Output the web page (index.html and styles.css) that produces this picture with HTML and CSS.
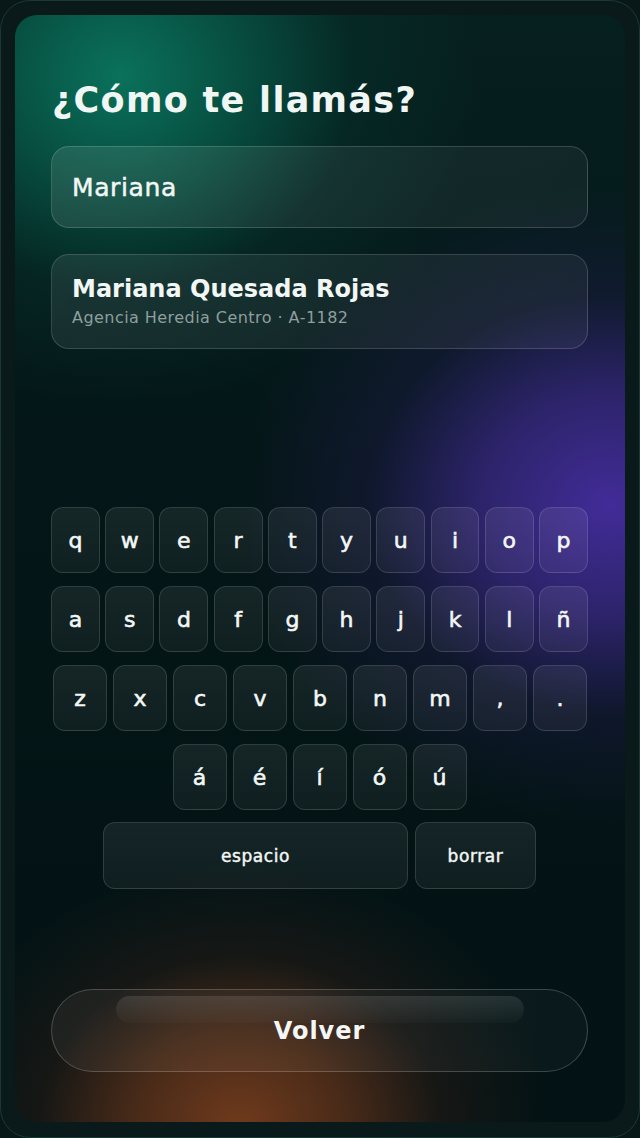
FILE: index.html
```html
<!DOCTYPE html>
<html lang="es">
<head>
<meta charset="utf-8">
<title>¿Cómo te llamás?</title>
<link rel="stylesheet" href="styles.css">
</head>
<body>
<div class="frame">
  <main class="screen">
    <h1 class="title">¿Cómo te llamás?</h1>
    <div class="input">Mariana</div>
    <div class="card">
      <div class="card-name">Mariana Quesada Rojas</div>
      <div class="card-sub">Agencia Heredia Centro · A-1182</div>
    </div>
    <div class="keyboard">
      <div class="row row-full">
        <button class="key">q</button><button class="key">w</button><button class="key">e</button><button class="key">r</button><button class="key">t</button><button class="key">y</button><button class="key">u</button><button class="key">i</button><button class="key">o</button><button class="key">p</button>
      </div>
      <div class="row row-full">
        <button class="key">a</button><button class="key">s</button><button class="key">d</button><button class="key">f</button><button class="key">g</button><button class="key">h</button><button class="key">j</button><button class="key">k</button><button class="key">l</button><button class="key">ñ</button>
      </div>
      <div class="row row-nine">
        <button class="key">z</button><button class="key">x</button><button class="key">c</button><button class="key">v</button><button class="key">b</button><button class="key">n</button><button class="key">m</button><button class="key">,</button><button class="key">.</button>
      </div>
      <div class="row row-center">
        <button class="key key-fixed">á</button><button class="key key-fixed">é</button><button class="key key-fixed">í</button><button class="key key-fixed">ó</button><button class="key key-fixed">ú</button>
      </div>
      <div class="row row-center row-actions">
        <button class="key key-space">espacio</button><button class="key key-del">borrar</button>
      </div>
    </div>
    <button class="volver">Volver</button>
  </main>
</div>
</body>
</html>
```

FILE: styles.css
```css
* { box-sizing: border-box; }
html, body {
  margin: 0;
  padding: 0;
  background: #081818;
}
body {
  width: 640px;
  height: 1138px;
  font-family: "DejaVu Sans", "Liberation Sans", sans-serif;
  color: #eef5f3;
}
.frame {
  width: 640px;
  height: 1138px;
  border: 1px solid #1c3835;
  border-radius: 30px;
  padding: 14px 14px 15px 14px;
  background: #0a1a1b;
}
.screen {
  position: relative;
  height: 100%;
  border-radius: 22px;
  overflow: hidden;
  padding: 0 37px 0 36px;
  display: flex;
  flex-direction: column;
  background:
    radial-gradient(ellipse 360px 330px at 105px 60px, rgba(10, 118, 94, 0.95) 0%, rgba(8, 100, 80, 0.65) 35%, rgba(6, 62, 54, 0.3) 65%, rgba(4, 30, 30, 0) 100%),
    radial-gradient(ellipse 370px 320px at 595px 490px, rgba(66, 44, 152, 1) 0%, rgba(58, 40, 134, 0.75) 35%, rgba(36, 28, 84, 0.35) 65%, rgba(10, 16, 30, 0) 100%),
    radial-gradient(ellipse 310px 260px at 225px 1110px, rgba(112, 58, 28, 1) 0%, rgba(94, 50, 26, 0.75) 35%, rgba(56, 32, 22, 0.35) 65%, rgba(10, 20, 20, 0) 100%),
    linear-gradient(180deg, #06201f 0%, #041617 40%, #031214 100%);
}
.title {
  margin: 64px 0 0 1px;
  font-size: 35px;
  line-height: 42px;
  font-weight: 700;
  letter-spacing: 1.3px;
  color: #f0f6f4;
}
.input {
  margin-top: 25px;
  height: 82px;
  border-radius: 18px;
  border: 1px solid rgba(255, 255, 255, 0.16);
  background: linear-gradient(120deg, rgba(255, 255, 255, 0.10) 0%, rgba(255, 255, 255, 0.06) 60%, rgba(255, 255, 255, 0.05) 100%);
  display: flex;
  align-items: center;
  padding: 0 20px;
  font-size: 25px;
  font-weight: 400;
  letter-spacing: 0.6px;
  -webkit-text-stroke: 0.5px currentColor;
  color: #f2f7f5;
}
.card {
  margin-top: 26px;
  height: 95px;
  border-radius: 18px;
  border: 1px solid rgba(255, 255, 255, 0.15);
  background: linear-gradient(120deg, rgba(255, 255, 255, 0.08) 0%, rgba(255, 255, 255, 0.05) 100%);
  padding: 19px 20px 0 20px;
}
.card-name {
  font-size: 24px;
  line-height: 30px;
  font-weight: 700;
  color: #f2f7f5;
}
.card-sub {
  margin-top: 4px;
  font-size: 16px;
  line-height: 20px;
  font-weight: 400;
  letter-spacing: 0.45px;
  color: #8e9f9e;
}
.keyboard {
  margin-top: 158px;
  display: flex;
  flex-direction: column;
  gap: 13px;
}
.row {
  display: flex;
  gap: 5.4px;
  height: 66px;
}
.row-nine {
  gap: 6px;
  padding: 0 1px 0 2px;
}
.row-center {
  justify-content: center;
  gap: 6px;
}
.row-actions {
  gap: 7px;
  height: 67px;
  margin-top: -1px;
}
.key {
  flex: 1 1 0;
  min-width: 0;
  height: 100%;
  margin: 0;
  padding: 0;
  border-radius: 12px;
  border: 1px solid rgba(255, 255, 255, 0.13);
  background: linear-gradient(180deg, rgba(255, 255, 255, 0.075) 0%, rgba(255, 255, 255, 0.05) 100%);
  color: #f3f7f6;
  font-family: inherit;
  font-size: 22px;
  font-weight: 400;
  -webkit-text-stroke: 0.6px currentColor;
  display: flex;
  align-items: center;
  justify-content: center;
}
.key-fixed {
  flex: 0 0 54px;
}
.key-space {
  flex: 0 0 305px;
  font-size: 17px;
  letter-spacing: 0.6px;
  -webkit-text-stroke: 0.45px currentColor;
}
.key-del {
  flex: 0 0 121px;
  font-size: 17px;
  letter-spacing: 0.6px;
  -webkit-text-stroke: 0.45px currentColor;
}
.volver {
  position: relative;
  margin-top: 100px;
  height: 83px;
  width: 100%;
  border-radius: 42px;
  border: 1px solid rgba(255, 255, 255, 0.2);
  background: linear-gradient(90deg, rgba(255, 255, 255, 0.05) 0%, rgba(255, 255, 255, 0.03) 100%);
  color: #f3f7f6;
  font-family: inherit;
  font-size: 24px;
  font-weight: 700;
  letter-spacing: 1px;
  padding: 0;
}
.volver::before {
  content: "";
  position: absolute;
  top: 6px;
  left: 64px;
  right: 63px;
  height: 27px;
  border-radius: 14px;
  background: linear-gradient(180deg, rgba(255, 255, 255, 0.11) 0%, rgba(255, 255, 255, 0.02) 100%);
}
```
